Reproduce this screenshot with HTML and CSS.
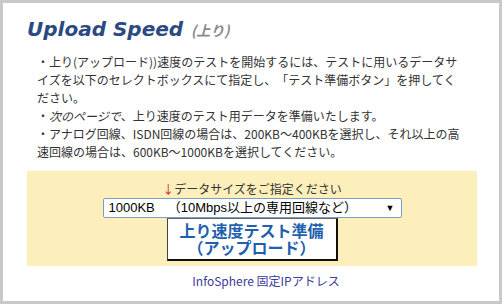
FILE: index.html
```html
<!DOCTYPE html>
<html lang="ja">
<head>
<meta charset="utf-8">
<title>Upload Speed</title>
<link rel="stylesheet" href="styles.css">
</head>
<body>
<div class="frame">
  <h1 class="title">Upload Speed <span class="sub">(上り)</span></h1>
  <div class="desc">
    <p>・上り(アップロード))速度のテストを開始するには、テストに用いるデータサイズを以下のセレクトボックスにて指定し、「テスト準備ボタン」を押してください。</p>
    <p>・<em class="em">次のページで</em>、上り速度のテスト用データを準備いたします。</p>
    <p>・アナログ回線、ISDN回線の場合は、200KB～400KBを選択し、それ以上の高速回線の場合は、600KB～1000KBを選択してください。</p>
  </div>
  <div class="panel">
    <div class="label"><span class="arrow">↓</span>データサイズをご指定ください</div>
    <div class="select"><span class="opt">1000KB　（10Mbps以上の専用回線など）</span><span class="caret">▼</span></div>
    <button class="go" type="button"><span class="go-line">上り速度テスト準備</span><span class="go-line">（アップロード）</span></button>
  </div>
  <div class="foot"><a class="link" href="#">InfoSphere 固定IPアドレス</a></div>
</div>
</body>
</html>
```
FILE: styles.css
```css
html, body {
  margin: 0;
  padding: 0;
  background: #ffffff;
}
body {
  width: 504px;
  height: 306px;
  text-spacing-trim: space-all;
}
.frame {
  box-sizing: border-box;
  width: 502px;
  height: 304px;
  border: 3px solid #c9c9c9;
  padding: 14px 22px 0 24px;
}
.title {
  margin: 0;
  font: italic bold 20px/24px "DejaVu Sans", sans-serif;
  color: #2b4a82;
}
.sub {
  font: italic bold 14px "Noto Sans CJK JP", sans-serif;
  color: #8a8a8a;
  margin-left: 1px;
}
.desc {
  margin: 12px 0 0;
  padding: 0 10px;
  font: 12px/18px "Noto Sans CJK JP", sans-serif;
  color: #333333;
  text-spacing-trim: space-all;
}
.desc p {
  margin: 0;
}
.em {
  font-style: italic;
}
.panel {
  margin-top: 10px;
  background: #fcefbb;
  padding: 9px 0 5px;
  display: flex;
  flex-direction: column;
  align-items: center;
}
.label {
  font: 12px/18px "Noto Sans CJK JP", sans-serif;
  color: #333333;
}
.arrow {
  color: #d21a1a;
}
.select {
  box-sizing: border-box;
  width: 299px;
  height: 20px;
  border: 1px solid #7f9dc0;
  border-radius: 2px;
  background: #ffffff;
  display: flex;
  align-items: center;
  justify-content: space-between;
  padding: 0 6px 0 5px;
  font: 13px/18px "Liberation Sans", "Noto Sans CJK JP", sans-serif;
  color: #000000;
  text-spacing-trim: space-all;
}
.caret {
  font-size: 9px;
}
.go {
  box-sizing: border-box;
  width: 171px;
  height: 43px;
  margin: 0;
  padding: 3px 0 0;
  background: #ffffff;
  border-top: 1px solid #666666;
  border-left: 1px solid #444444;
  border-right: 2px solid #111111;
  border-bottom: 2px solid #111111;
  display: flex;
  flex-direction: column;
  align-items: center;
  font: bold 16px/17px "Noto Sans CJK JP", sans-serif;
  color: #1f5fae;
  text-spacing-trim: space-all;
}
.go-line {
  display: block;
  height: 17px;
  line-height: 17px;
}
.foot {
  text-align: center;
  padding-left: 28px;
  margin-top: 6px;
  font: 12px/18px "Noto Sans CJK JP", sans-serif;
}
.link {
  color: #3b3ba0;
  text-decoration: none;
}
```
